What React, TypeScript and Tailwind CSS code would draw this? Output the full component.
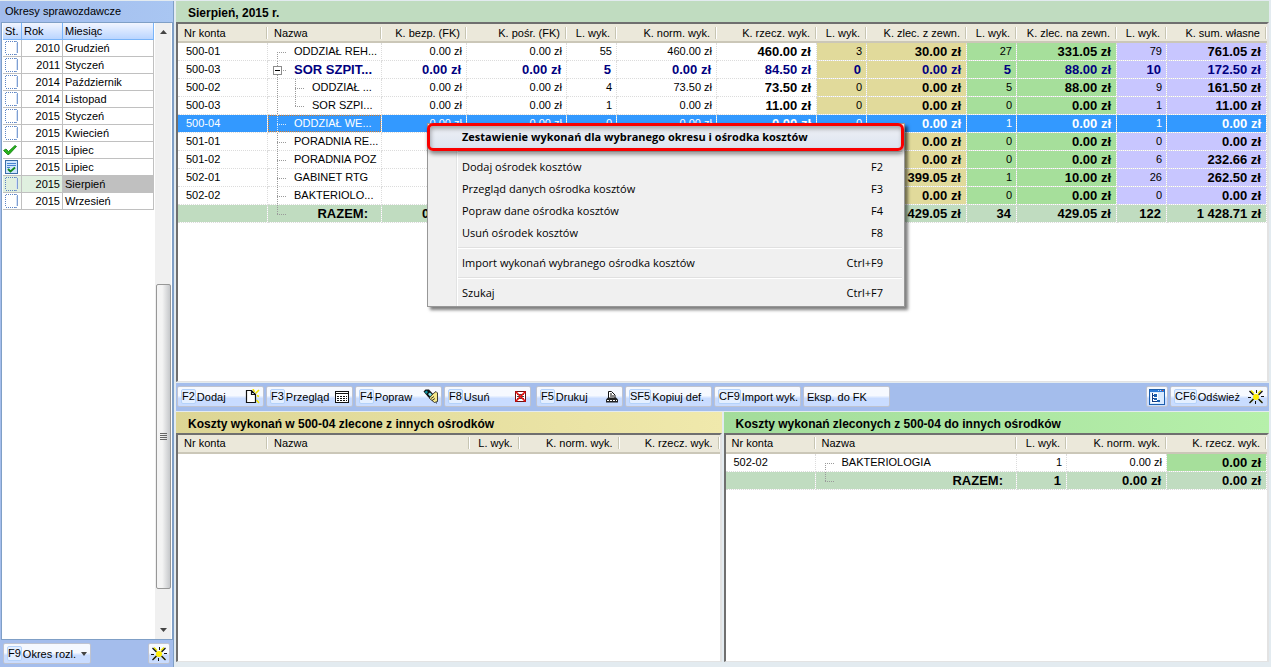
import type { ReactNode } from "react";
import clsx from "clsx";

type Tree = "first" | "box" | "mid" | "last" | "child" | "childLast";

type CostRow = {
  account: string;
  name: string;
  tree: Tree;
  values: string[];
  kind?: "parent" | "selected" | "total";
};

const periods = [
  { status: "page", year: 2010, month: "Grudzień" },
  { status: "page", year: 2011, month: "Styczeń" },
  { status: "page", year: 2014, month: "Październik" },
  { status: "page", year: 2014, month: "Listopad" },
  { status: "page", year: 2015, month: "Styczeń" },
  { status: "page", year: 2015, month: "Kwiecień" },
  { status: "check", year: 2015, month: "Lipiec" },
  { status: "doc", year: 2015, month: "Lipiec" },
  { status: "page", year: 2015, month: "Sierpień", selected: true },
  { status: "page", year: 2015, month: "Wrzesień" },
];

const mainColumns = [
  { label: "Nr konta", width: "w-[90px]" },
  { label: "Nazwa", width: "" },
  { label: "K. bezp. (FK)", width: "w-[85px]" },
  { label: "K. pośr. (FK)", width: "w-[100px]" },
  { label: "L. wyk.", width: "w-[50px]" },
  { label: "K. norm. wyk.", width: "w-[100px]" },
  { label: "K. rzecz. wyk.", width: "w-[100px]", bold: true },
  { label: "L. wyk.", width: "w-[50px]", bg: "bg-[#e1da9b]" },
  { label: "K. zlec. z zewn.", width: "w-[100px]", bg: "bg-[#e1da9b]", bold: true },
  { label: "L. wyk.", width: "w-[50px]", bg: "bg-[#a6df9b]" },
  { label: "K. zlec. na zewn.", width: "w-[100px]", bg: "bg-[#a6df9b]", bold: true },
  { label: "L. wyk.", width: "w-[50px]", bg: "bg-[#c8c6ff]" },
  { label: "K. sum. własne", width: "w-[100px]", bg: "bg-[#c8c6ff]", bold: true },
];

const detailColumns = [
  { label: "Nr konta", width: "w-[90px]" },
  { label: "Nazwa", width: "" },
  { label: "L. wyk.", width: "w-[50px]" },
  { label: "K. norm. wyk.", width: "w-[100px]" },
  { label: "K. rzecz. wyk.", width: "w-[100px]", bg: "bg-[#a6df9b]", bold: true },
];

const mainRows: CostRow[] = [
  { account: "500-01", name: "ODDZIAŁ REH...", tree: "first", values: ["0.00 zł", "0.00 zł", "55", "460.00 zł", "460.00 zł", "3", "30.00 zł", "27", "331.05 zł", "79", "761.05 zł"] },
  { account: "500-03", name: "SOR SZPIT...", tree: "box", kind: "parent", values: ["0.00 zł", "0.00 zł", "5", "0.00 zł", "84.50 zł", "0", "0.00 zł", "5", "88.00 zł", "10", "172.50 zł"] },
  { account: "500-02", name: "ODDZIAŁ ...", tree: "child", values: ["0.00 zł", "0.00 zł", "4", "73.50 zł", "73.50 zł", "0", "0.00 zł", "5", "88.00 zł", "9", "161.50 zł"] },
  { account: "500-03", name: "SOR SZPI...", tree: "childLast", values: ["0.00 zł", "0.00 zł", "1", "0.00 zł", "11.00 zł", "0", "0.00 zł", "0", "0.00 zł", "1", "11.00 zł"] },
  { account: "500-04", name: "ODDZIAŁ WE...", tree: "mid", kind: "selected", values: ["0.00 zł", "0.00 zł", "0", "0.00 zł", "0.00 zł", "0", "0.00 zł", "1", "0.00 zł", "1", "0.00 zł"] },
  { account: "501-01", name: "PORADNIA RE...", tree: "mid", values: ["", "", "", "", "", "", "0.00 zł", "0", "0.00 zł", "0", "0.00 zł"] },
  { account: "501-02", name: "PORADNIA POZ", tree: "mid", values: ["", "", "", "", "", "", "0.00 zł", "0", "0.00 zł", "6", "232.66 zł"] },
  { account: "502-01", name: "GABINET RTG", tree: "mid", values: ["", "", "", "", "", "", "399.05 zł", "1", "10.00 zł", "26", "262.50 zł"] },
  { account: "502-02", name: "BAKTERIOLO...", tree: "mid", values: ["", "", "", "", "", "", "0.00 zł", "0", "0.00 zł", "0", "0.00 zł"] },
  { account: "", name: "RAZEM:", tree: "last", kind: "total", values: ["0.00 zł", "", "", "", "", "", "429.05 zł", "34", "429.05 zł", "122", "1 428.71 zł"] },
];

const outgoingRows: CostRow[] = [
  { account: "502-02", name: "BAKTERIOLOGIA", tree: "first", values: ["1", "0.00 zł", "0.00 zł"] },
  { account: "", name: "RAZEM:", tree: "last", kind: "total", values: ["1", "0.00 zł", "0.00 zł"] },
];

const menuGroups = [
  [
    { label: "Dodaj ośrodek kosztów", keys: "F2" },
    { label: "Przegląd danych ośrodka kosztów", keys: "F3" },
    { label: "Popraw dane ośrodka kosztów", keys: "F4" },
    { label: "Usuń ośrodek kosztów", keys: "F8" },
  ],
  [{ label: "Import wykonań wybranego ośrodka kosztów", keys: "Ctrl+F9" }],
  [{ label: "Szukaj", keys: "Ctrl+F7" }],
];

/* ---------- icons ---------- */

function StatusIcon({ status }: { status: string }) {
  if (status === "check") {
    return (
      <svg width="14" height="14" viewBox="0 0 14 14" className="block">
        <path d="M.5 7.5 3 6 5.500 8.500 12 2.5 13.5 3.5 6 11.5 4.500 11.5Z" fill="#27b31d" stroke="#0d7a0a" strokeWidth=".8" />
      </svg>
    );
  }
  if (status === "doc") {
    return (
      <svg width="14" height="14" viewBox="0 0 14 14" className="mx-[2px] block">
        <rect x=".5" y=".5" width="12" height="13" fill="#cfe6ff" stroke="#3a6ea8" />
        <path d="M2 3.5h9M2 5.5h9M2 7.5h3" stroke="#4a86d0" />
        <path d="M3 9 5.500 11.5 10 7.5" fill="none" stroke="#128a1c" strokeWidth="1.8" />
      </svg>
    );
  }
  return (
    <svg width="14" height="14" viewBox="0 0 14 14" className="mx-[2px] block" shapeRendering="crispEdges">
      <path d="M1 .5h10M.5 1v12M1 13.500h9" fill="none" stroke="#5c84c4" strokeDasharray="1 1" />
      <path d="M10 .5h2M12.500 1v11M10 13.500h2" fill="none" stroke="#7f9fd2" />
      <path d="M11.500 2v10" stroke="#d4e2f6" />
    </svg>
  );
}

function SunIcon() {
  return (
    <svg width="16" height="16" viewBox="0 0 16 16">
      <path d="M3 1.500l3 3M13 1.500l-3 3M2.500 13l3-3M14 13.500l-3-3" stroke="#f4ec00" strokeWidth="1.600" />
      <path d="M1.500 2l4 4M14.500 2l-4 4M1.500 14l4-4M14.500 14l-4-4" stroke="#111" strokeWidth="1.300" />
      <path d="M8.500 1v3M7.500 12v3M0 8.500h3M13 7.500h3" stroke="#111" shapeRendering="crispEdges" />
      <circle cx="8" cy="8" r="3" fill="#ffee00" />
    </svg>
  );
}

function NewIcon() {
  return (
    <svg width="15" height="15" viewBox="0 0 15 15">
      <path d="M8 0l1.500 3M14 1l-3.500 3.500M14 7.500l-2-1M14 14l-2.500-3" stroke="#f4e400" strokeWidth="1.600" />
      <path d="M1.500 1.500h5l4 4v8h-9zM6.500 1.500v4h4" fill="#fff" stroke="#111" strokeWidth="1.200" />
    </svg>
  );
}

function ListIcon() {
  return (
    <svg width="14" height="14" viewBox="0 0 14 14" shapeRendering="crispEdges">
      <rect x=".5" y="1.500" width="13" height="11" fill="#fff" stroke="#111" />
      <path d="M1 3.500h12" stroke="#111" />
      <path d="M2 6.500h10M2 8.500h10M2 10.500h10" stroke="#111" strokeDasharray="2 1" />
    </svg>
  );
}

function EditIcon() {
  return (
    <svg width="15" height="15" viewBox="0 0 15 15">
      <path d="M6.500 7.500l6.500-5 1.500 1.500v8.500l-3 1-5-4z" fill="#f5e88a" stroke="#111" strokeWidth=".8" />
      <path d="M8 9.500l3-2M9 11.500l3-2M13.500 13.500v1" stroke="#111" strokeWidth=".8" />
      <path d="M.5 2.500l2-2h3.500l4 4.500-3 3.500h-1.500z" fill="#111" />
      <path d="M1.500 3l2-1.500 1.500 1.500-1.500 2z" fill="#0b8f9c" />
      <path d="M5 5l2-1.500 2 2-2 2z" fill="#7fe3ea" />
    </svg>
  );
}

function DeleteIcon() {
  return (
    <svg width="13" height="13" viewBox="0 0 13 13">
      <rect x="1.500" y="1.500" width="10" height="10" fill="#fff" stroke="#701010" />
      <path d="M3 4.500h7M3 6.500h7M3 8.500h7" stroke="#444" />
      <path d="M1.500 1.500l10 10M11.500 1.500l-10 10" stroke="#e81010" strokeWidth="1.600" />
    </svg>
  );
}

function PrintIcon() {
  return (
    <svg width="14" height="14" viewBox="0 0 14 14">
      <path d="M3.500 8V1.500h3l3.500 3.500v3" fill="#fff" stroke="#111" />
      <path d="M5 4h2M5 6h4" stroke="#111" />
      <path d="M3 7.500h8l2 2v3H1v-3z" fill="#222" />
      <path d="M2 10.500h10" stroke="#fff" strokeDasharray="2 1" />
    </svg>
  );
}

function TreeWindowIcon() {
  return (
    <svg width="16" height="16" viewBox="0 0 16 16" shapeRendering="crispEdges">
      <rect x=".5" y=".5" width="15" height="15" fill="#d8eaff" stroke="#1c5fae" />
      <rect x="1" y="1" width="14" height="2" fill="#2d7ad6" />
      <path d="M9 1.500h1M11 1.500h1" stroke="#bcdcff" />
      <path d="M13 1.500h1" stroke="#f04020" />
      <rect x="2" y="4" width="7" height="10" fill="#fff" />
      <path d="M3.500 4v9M4 6.500h2M4 9.500h2M4 12.500h4" stroke="#123a80" />
      <path d="M5 5h3v3H5zM5 9h3v2H5zM8 11h3v2H8z" fill="#1c5fae" />
    </svg>
  );
}

const treePaths: Record<Tree, string> = {
  first: "M9.500 9V18M9 9.500H18",
  box: "M9.500 0V18M13 9.500H18",
  mid: "M9.500 0V18M9 9.500H18",
  last: "M9.500 0V10M9 9.500H18",
  child: "M9.500 0V18M27.500 0V18M27 9.500H36",
  childLast: "M9.500 0V18M27.500 0V10M27 9.500H36",
};

function TreeLines({ tree, light }: { tree: Tree; light?: boolean }) {
  const child = tree === "child" || tree === "childLast";
  return (
    <svg
      width={child ? 44 : 26}
      height="18"
      className="block shrink-0"
      shapeRendering="crispEdges"
    >
      <path d={treePaths[tree]} fill="none" stroke={light ? "#dbe9f7" : "#9a9a9a"} strokeDasharray="1 1" />
      {tree === "box" && (
        <>
          <rect x="5.500" y="5.500" width="8" height="8" fill="#fff" stroke="#8c8c8c" />
          <path d="M7 9.500h5" stroke="#000" />
        </>
      )}
    </svg>
  );
}

/* ---------- tables ---------- */

type Column = { label: string; width: string; bg?: string; bold?: boolean };

function CostTable({ columns, rows }: { columns: Column[]; rows: CostRow[] }) {
  return (
    <div className="min-h-0 flex-1 overflow-hidden border-t-2 border-r-2 border-b border-l-2 border-t-[#6f6f6f] border-r-[#e3e3e3] border-b-[#e3e3e3] border-l-[#6f6f6f] bg-white">
      <table className="w-full table-fixed border-separate border-spacing-0">
        <thead>
          <tr className="bg-[#ebe8da]">
            {columns.map((col, i) => (
              <th key={i} className={clsx("h-[19px] border-b-2 border-[#cbc7b8] p-0 font-normal", col.width)}>
                <div className="flex h-[17px] items-center">
                  <span className={clsx("flex-1 whitespace-nowrap", i < 2 ? "pl-[6px] text-left" : "pr-[5px] text-right")}>
                    {col.label}
                  </span>
                  <span className="h-3 w-[2px] border-r border-l border-l-[#c7c5b2] border-r-white" />
                </div>
              </th>
            ))}
          </tr>
        </thead>
        <tbody>
          {rows.map((row, r) => {
            const selected = row.kind === "selected";
            const total = row.kind === "total";
            const strong = row.kind === "parent" || total;
            return (
              <tr
                key={r}
                className={clsx(selected && "text-white", row.kind === "parent" && "text-[#000080]")}
              >
                {columns.map((col, c) => {
                  const bold = c > 0 && (strong || col.bold);
                  return (
                    <td
                      key={c}
                      className={clsx(
                        "h-[18px] overflow-hidden border-r border-b border-dotted border-[#dcdcdc] bg-clip-padding p-0 leading-[17px] whitespace-nowrap",
                        selected ? "bg-[#3399ff]" : total ? "bg-[#c0dcc0]" : col.bg,
                        bold && "text-[13px] font-bold",
                        c === 0 && (row.kind === "parent" ? "pl-2 text-black" : "pl-2"),
                        c > 1 && "text-right",
                        c > 1 && (bold ? "pr-[5px]" : "pr-1")
                      )}
                    >
                      {c === 0 && row.account}
                      {c === 1 && (
                        <div className={clsx("flex h-[17px]", selected && "outline-1 -outline-offset-1 outline-dotted outline-[#c87830]")}>
                          <TreeLines tree={row.tree} light={selected} />
                          <span className={clsx(total && "flex-1 pr-[13px] text-right")}>{row.name}</span>
                        </div>
                      )}
                      {c > 1 && row.values[c - 2]}
                    </td>
                  );
                })}
              </tr>
            );
          })}
        </tbody>
      </table>
    </div>
  );
}

function ToolButton({ hotkey, label, icon, name, className }: { hotkey?: string; label?: string; icon?: ReactNode; name?: string; className: string }) {
  return (
    <button
      type="button"
      aria-label={name}
      className={clsx(
        "flex h-[21px] shrink-0 items-center rounded-[2px] border border-[#bfc3d0] bg-linear-to-b from-[#f6f9ff] from-45% to-[#c9dcff] to-60% whitespace-nowrap",
        className
      )}
    >
      {hotkey && (
        <span className="mr-px rounded-[2px] border border-[#b4d2fa] bg-[#e4efff] leading-[13px]">{hotkey}</span>
      )}
      {label && <span>{label}</span>}
      {icon && <span className={clsx(label && "ml-auto")}>{icon}</span>}
    </button>
  );
}

function PeriodsPanel() {
  return (
    <aside className="flex w-[173px] shrink-0 flex-col bg-[#a4bdec] pl-px">
      <h2 className="h-[21px] bg-linear-to-r from-[#a2bcec] to-[#a9c6f2] pl-1 leading-[21px]">Okresy sprawozdawcze</h2>
      <div className="flex min-h-0 flex-1 justify-between border border-[#7f9fc6] bg-white px-px">
        <table className="w-[151px] table-fixed border-separate border-spacing-0 self-start">
          <thead>
            <tr className="bg-linear-to-b from-[#f2f5ff] to-[#b6d3ff]">
              <th className="h-[17px] w-[19px] border-r border-b border-[#79b4f8] p-0 pl-[2px] text-left font-normal">St.</th>
              <th className="w-[41px] border-r border-b border-[#79b4f8] p-0 pl-[2px] text-left font-normal">Rok</th>
              <th className="border-r border-b border-[#79b4f8] p-0 pl-[2px] text-left font-normal">Miesiąc</th>
            </tr>
          </thead>
          <tbody>
            {periods.map((p, i) => (
              <tr key={i} className="leading-4">
                <td className={clsx("h-[17px] border-r border-b border-[#c0c0c0] p-0", p.selected && "bg-[#e0f0e0]")}>
                  <StatusIcon status={p.status} />
                </td>
                <td className={clsx("border-r border-b border-[#c0c0c0] p-0 pr-[2px] text-right", p.selected && "bg-[#e0f0e0]")}>{p.year}</td>
                <td className={clsx("border-r border-b border-[#c0c0c0] p-0 pl-[2px]", p.selected && "bg-[#c0c0c0]")}>{p.month}</td>
              </tr>
            ))}
          </tbody>
        </table>

        {/* Scrollbar */}
        <div className="flex w-4 flex-col items-center bg-[#f0f0f0]">
          <svg width="7" height="17" className="shrink-0">
            <path d="M0 11h7L3.500 7z" fill="#444" />
          </svg>
          <div className="flex-[244]" />
          <div className="flex w-[15px] flex-[303] flex-col items-center justify-center gap-px rounded-[2px] border border-[#979797] bg-linear-to-r from-[#f4f4f4] from-40% to-[#c6c8cb]">
            <span className="h-px w-[7px] bg-[#666]" />
            <span className="h-px w-[7px] bg-[#666]" />
            <span className="h-px w-[7px] bg-[#666]" />
            <span className="h-px w-[7px] bg-[#666]" />
          </div>
          <div className="flex-[33]" />
          <svg width="7" height="17" className="shrink-0">
            <path d="M0 6h7L3.500 10z" fill="#444" />
          </svg>
        </div>
      </div>
      <div className="flex h-[27px] shrink-0 items-center justify-between pr-[3px] pl-[2px]">
        <ToolButton
          hotkey="F9"
          label="Okres rozl."
          className="w-[88px] px-[3px]"
          icon={
            <svg width="6" height="4" className="block">
              <path d="M0 0h6L3 4z" fill="#444" />
            </svg>
          }
        />
        <ToolButton name="Odśwież okresy" className="w-[22px] justify-center" icon={<SunIcon />} />
      </div>
    </aside>
  );
}

function ContextMenu() {
  return (
    <div
      role="menu"
      className="absolute top-[123px] left-[427px] w-[478px] border border-[#979797] bg-[#f0f0f0] pt-[2px] pb-[2px] font-['Open_Sans','Noto_Sans',sans-serif] text-[11px] shadow-[3px_3px_3px_rgba(0,0,0,0.5)]"
    >
      <div className="absolute top-0 bottom-0 left-7 w-[2px] border-l border-l-[#e2e3e3] bg-white" />
      <button
        type="button"
        role="menuitem"
        className="relative flex h-[22px] w-full items-center bg-linear-to-b from-[#eef0f5] to-[#dde5f0] pl-[34px] font-bold"
      >
        Zestawienie wykonań dla wybranego okresu i ośrodka kosztów
      </button>
      {menuGroups.map((group, g) => (
        <div key={g} className="relative">
          <div className="flex h-2 items-center pr-[2px] pl-[30px]">
            <div className="h-[2px] flex-1 border-t border-[#e0e0e0] bg-white" />
          </div>
          {group.map((item) => (
            <button
              key={item.label}
              type="button"
              role="menuitem"
              className="flex h-[22px] w-full items-center justify-between pr-[21px] pl-[34px]"
            >
              <span>{item.label}</span>
              <span>{item.keys}</span>
            </button>
          ))}
        </div>
      ))}
      {/* Highlight frame around the first entry */}
      <div className="pointer-events-none absolute -top-px right-0 -left-px h-7 rounded-md border-3 border-[#f80000] shadow-[1px_3px_4px_rgba(0,0,0,0.45),inset_1px_3px_4px_rgba(0,0,0,0.3)]" />
    </div>
  );
}

export default function App() {
  return (
    <div className="relative flex h-screen w-full overflow-hidden bg-[#e3ebf0] pt-px font-['Liberation_Sans',Arial,sans-serif] text-[11px] leading-[14px] text-black">
      <PeriodsPanel />

      <main className="flex min-w-0 flex-1 flex-col border-l border-[#7f9fc6] pr-[2px] pb-[5px] pl-[2px]">
        <section className="flex min-h-0 flex-[360] flex-col">
          <h2 className="h-[21px] shrink-0 bg-[#c0dcc0] pl-3 text-[12px] leading-[25px] font-bold">Sierpień, 2015 r.</h2>
          <CostTable columns={mainColumns} rows={mainRows} />
        </section>

        {/* Toolbar */}
        <div className="mt-px flex h-7 shrink-0 items-center gap-[2px] bg-[#a4bdec] px-px">
          <ToolButton hotkey="F2" label="Dodaj" icon={<NewIcon />} className="w-[87px] px-[3px]" />
          <ToolButton hotkey="F3" label="Przegląd" icon={<ListIcon />} className="w-[87px] px-[3px]" />
          <ToolButton hotkey="F4" label="Popraw" icon={<EditIcon />} className="w-[87px] px-[3px]" />
          <ToolButton hotkey="F8" label="Usuń" icon={<DeleteIcon />} className="w-[87px] px-[3px]" />
          <span className="w-px" />
          <ToolButton hotkey="F5" label="Drukuj" icon={<PrintIcon />} className="w-[87px] px-[3px]" />
          <ToolButton hotkey="SF5" label="Kopiuj def." className="w-[87px] px-[3px]" />
          <ToolButton hotkey="CF9" label="Import wyk." className="w-[87px] px-[3px]" />
          <ToolButton label="Eksp. do FK" className="w-[87px] px-[3px]" />
          <span className="flex-1" />
          <ToolButton name="Widok drzewa" icon={<TreeWindowIcon />} className="w-[22px] justify-center" />
          <ToolButton hotkey="CF6" label="Odśwież" icon={<SunIcon />} className="w-[98px] px-[3px]" />
        </div>

        <div className="mt-px grid min-h-0 flex-[237] grid-cols-2 gap-[2px]">
          <section className="flex min-h-0 flex-col">
            <h2 className="h-[21px] shrink-0 bg-linear-to-r from-[#dcd594] to-[#f0e9ac] pl-3 text-[12px] leading-[24px] font-bold">
              Koszty wykonań w 500-04 zlecone z innych ośrodków
            </h2>
            <CostTable columns={detailColumns} rows={[]} />
          </section>
          <section className="flex min-h-0 flex-col">
            <h2 className="h-[21px] shrink-0 bg-linear-to-r from-[#a3dc9b] to-[#b6f0aa] pl-3 text-[12px] leading-[24px] font-bold">
              Koszty wykonań zleconych z 500-04 do innych ośrodków
            </h2>
            <CostTable columns={detailColumns} rows={outgoingRows} />
          </section>
        </div>
      </main>

      <ContextMenu />
    </div>
  );
}
